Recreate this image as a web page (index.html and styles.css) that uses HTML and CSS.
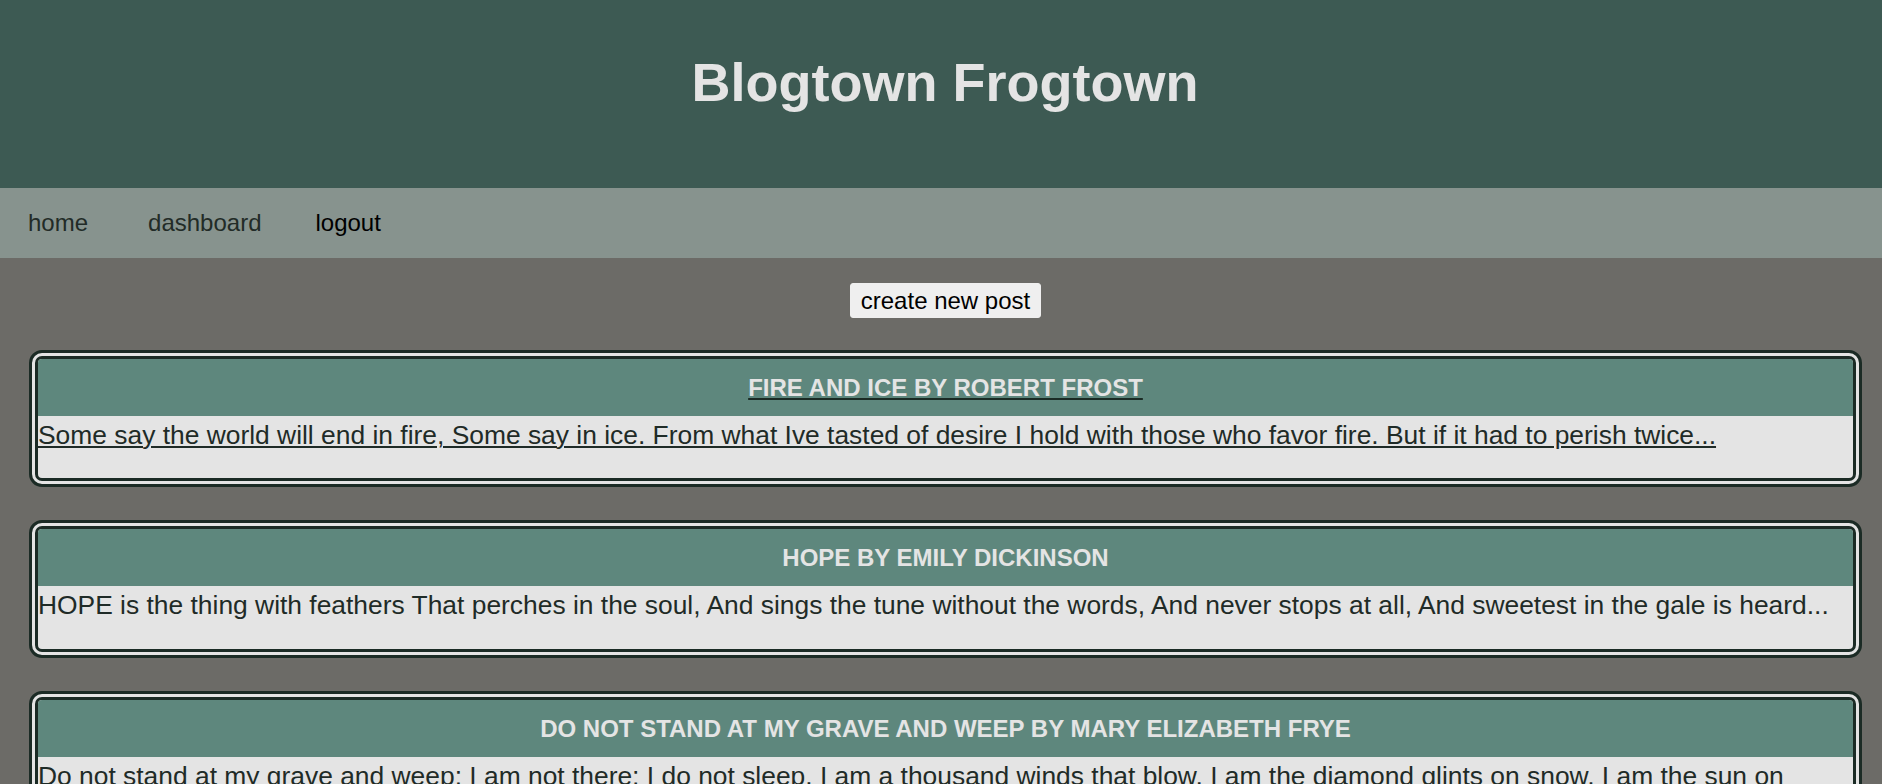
FILE: index.html
```html
<!DOCTYPE html>
<html lang="en">
<head>
<meta charset="utf-8">
<title>Blogtown Frogtown</title>
<link rel="stylesheet" href="styles.css">
</head>
<body>
<header class="site-header">
  <h1 class="site-title">Blogtown Frogtown</h1>
</header>
<nav class="site-nav">
  <a class="nav-link" href="#">home</a>
  <a class="nav-link nav-dash" href="#">dashboard</a>
  <a class="nav-link nav-logout" href="#">logout</a>
</nav>
<main class="content">
  <div class="actions">
    <button class="new-post" type="button">create new post</button>
  </div>
  <article class="post post-hover">
    <h2 class="post-title"><a href="#">FIRE AND ICE BY ROBERT FROST</a></h2>
    <p class="post-body"><a href="#">Some say the world will end in fire, Some say in ice. From what Ive tasted of desire I hold with those who favor fire. But if it had to perish twice...</a></p>
  </article>
  <article class="post">
    <h2 class="post-title"><a href="#">HOPE BY EMILY DICKINSON</a></h2>
    <p class="post-body"><a href="#">HOPE is the thing with feathers That perches in the soul, And sings the tune without the words, And never stops at all, And sweetest in the gale is heard...</a></p>
  </article>
  <article class="post">
    <h2 class="post-title"><a href="#">DO NOT STAND AT MY GRAVE AND WEEP BY MARY ELIZABETH FRYE</a></h2>
    <p class="post-body"><a href="#">Do not stand at my grave and weep: I am not there; I do not sleep. I am a thousand winds that blow, I am the diamond glints on snow, I am the sun on ripened grain...</a></p>
  </article>
</main>
</body>
</html>
```
FILE: styles.css
```css
html, body {
  margin: 0;
  padding: 0;
}
body {
  background: #6c6b67;
  font-family: "Liberation Sans", Arial, sans-serif;
  min-height: 784px;
}
.site-header {
  background: #3d5a53;
  height: 188px;
  box-sizing: border-box;
  padding: 51px 0 0 8px;
}
.site-title {
  margin: 0;
  text-align: center;
  font-size: 54px;
  font-weight: bold;
  color: #e4e4e4;
  line-height: 62px;
}
.site-nav {
  background: #87938e;
  height: 70px;
  box-sizing: border-box;
  padding: 21px 0 0 28px;
  display: flex;
  align-items: flex-start;
}
.nav-link {
  font-size: 24px;
  line-height: 28px;
  color: #222b27;
  text-decoration: none;
}
.nav-dash {
  margin-left: 60px;
}
.nav-logout {
  margin-left: 54px;
  color: #000;
}
.content {
  padding: 25px 20px 0 29px;
}
.actions {
  display: flex;
  justify-content: center;
  margin-bottom: 32px;
}
.new-post {
  font-family: "Liberation Sans", Arial, sans-serif;
  font-size: 24px;
  line-height: 27px;
  padding: 3px 10px 3px 10px;
  border: 1px solid #efefef;
  border-radius: 3px;
  background: #efefef;
  color: #000;
}
.post {
  border: 9px double #1b2b25;
  border-radius: 13px;
  background: #e4e4e4;
  margin-bottom: 33px;
  overflow: hidden;
}
.post-title {
  margin: 0;
  background: #5e877d;
  text-align: center;
  font-size: 24px;
  font-weight: bold;
  line-height: 28px;
  padding: 15px 0 14px;
}
.post-title a {
  color: #e4e4e4;
  text-decoration: none;
}
.post-body {
  margin: 0;
  padding: 4px 0 28px;
  font-size: 26.4px;
  line-height: 30.4px;
}
.post-body a {
  color: #1f2b27;
  text-decoration: none;
}
.post-hover .post-title a,
.post-hover .post-body a {
  text-decoration: underline;
  text-decoration-thickness: 2px;
  text-underline-offset: 2px;
}
.post-hover .post-title a {
  text-decoration-color: #1b2b25;
}
```
